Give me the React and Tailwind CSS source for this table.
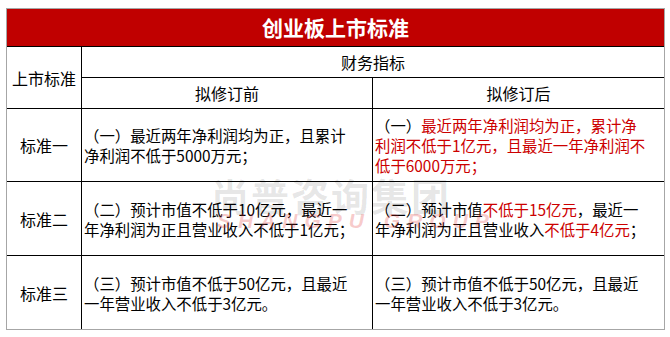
import React from 'react';

const R = ({ children }) => <span className="text-[#cc0000]">{children}</span>;

function Cell({ lines, className = '' }) {
  return (
    <div className={`flex flex-col justify-center px-[2px] leading-[20px] ${className}`}>
      {lines.map((l, i) => (
        <div key={i} className="whitespace-nowrap">{l}</div>
      ))}
    </div>
  );
}

export default function App() {
  const rows = [
    {
      label: '标准一',
      before: ['（一）最近两年净利润均为正，且累计', '净利润不低于5000万元；'],
      after: [
        <>（一）<R>最近两年净利润均为正，累计净</R></>,
        <R>利润不低于1亿元，且最近一年净利润不</R>,
        <R>低于6000万元；</R>,
      ],
      h: 'h-[73px]',
    },
    {
      label: '标准二',
      before: ['（二）预计市值不低于10亿元，最近一', '年净利润为正且营业收入不低于1亿元；'],
      after: [
        <>（二）预计市值<R>不低于15亿元</R>，最近一</>,
        <>年净利润为正且营业收入<R>不低于4亿元</R>；</>,
      ],
      h: 'h-[74px]',
    },
    {
      label: '标准三',
      before: ['（三）预计市值不低于50亿元，且最近', '一年营业收入不低于3亿元。'],
      after: ['（三）预计市值不低于50亿元，且最近', '一年营业收入不低于3亿元。'],
      h: 'h-[73px]',
      last: true,
    },
  ];

  return (
    <div className="w-[670px] h-[337px] bg-white pt-[8px] pl-[6px] font-['Noto_Sans_CJK_SC',sans-serif] text-[15.4px] text-black">
      <div className="relative w-[659px] border border-[#a6a6a6] bg-white">
        <div className="h-[38px] bg-[#c00000] border-b border-black flex items-center justify-center text-white font-bold text-[21px]">
          创业板上市标准
        </div>
        <div className="grid grid-cols-[75px_291px_291px]">
          <div className="row-span-2 h-[62px] border-r border-b border-black flex items-center justify-center text-[16px]">
            上市标准
          </div>
          <div className="col-span-2 h-[31px] border-b border-black flex items-center justify-center text-[16px]">
            财务指标
          </div>
          <div className="h-[31px] border-r border-b border-black flex items-center justify-center text-[16px]">
            拟修订前
          </div>
          <div className="h-[31px] border-b border-black flex items-center justify-center text-[16px]">
            拟修订后
          </div>
          {rows.map((r) => (
            <React.Fragment key={r.label}>
              <div className={`${r.h} border-r border-black ${r.last ? '' : 'border-b'} flex items-center justify-center text-[16px]`}>
                {r.label}
              </div>
              <Cell lines={r.before} className={`${r.h} border-r border-black ${r.last ? '' : 'border-b'}`} />
              <Cell lines={r.after} className={`${r.h} border-black ${r.last ? '' : 'border-b'}`} />
            </React.Fragment>
          ))}
        </div>
        <div className="pointer-events-none absolute left-[204px] top-[166px] flex flex-col items-start">
          <div className="text-[38px] font-bold tracking-[2px] leading-[40px] text-black/10">尚普咨询集团</div>
          <div className="-mt-[6px] ml-[6px] text-[21px] font-bold italic tracking-[7px] leading-[24px] text-[#e03030]/25 font-['Liberation_Sans',sans-serif]">
            SHANGPU GROUP
          </div>
        </div>
      </div>
    </div>
  );
}
